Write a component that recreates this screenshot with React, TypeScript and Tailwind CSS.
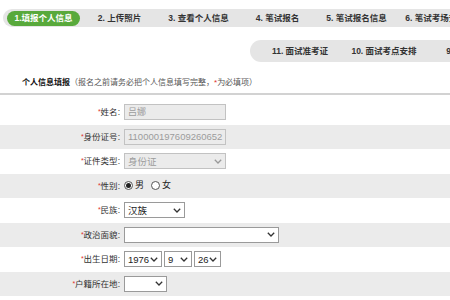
const FONT = { fontFamily: '"Liberation Sans", "Noto Sans CJK SC", sans-serif' };

const Chevron = ({ color = "#333" }: { color?: string }) => (
  <svg width="8" height="5" viewBox="0 0 8 5" className="shrink-0">
    <path d="M0.8 0.8 L4 4 L7.2 0.8" fill="none" stroke={color} strokeWidth="1.3" />
  </svg>
);

const Select = ({ value, w, disabled }: { value: string; w: string; disabled?: boolean }) => (
  <div
    className={`${w} h-[16px] flex items-center justify-between px-[3px] border ${
      disabled ? "bg-[#ebebeb] border-[#c2c2c2] text-[#9c9c9c]" : "bg-white border-[#9a9a9a] text-[#222]"
    }`}
  >
    <span className="text-[9.5px] leading-none">{value}</span>
    <Chevron color={disabled ? "#999" : "#333"} />
  </div>
);

const Radio = ({ checked }: { checked?: boolean }) => (
  <span className="w-[9px] h-[9px] rounded-full border border-[#555] bg-white flex items-center justify-center">
    {checked && <span className="w-[5px] h-[5px] rounded-full bg-[#222]" />}
  </span>
);

const Row = ({ label, gray, children }: { label: string; gray?: boolean; children: React.ReactNode }) => (
  <div className={`flex items-center h-[24.5px] ${gray ? "bg-[#ebebeb]" : "bg-white"}`}>
    <div className="w-[120px] text-right text-[8.5px] text-[#333] leading-none">
      <span className="text-[#e0322c] text-[7px] align-top">*</span>
      {label}:
    </div>
    <div className="ml-[4px] flex items-center">{children}</div>
  </div>
);

const tabs = ["2. 上传照片", "3. 查看个人信息", "4. 笔试报名", "5. 笔试报名信息", "6. 笔试考场安排"];
const tabs2 = ["11. 面试准考证", "10. 面试考点安排", "9. 面试成绩"];

export default function App() {
  return (
    <div className="w-[450px] h-[300px] bg-white overflow-hidden" style={FONT}>
      {/* step tabs */}
      <div className="mt-[9px] ml-[3px] h-[18px] bg-[#e5e5e5] rounded-l-full flex items-center whitespace-nowrap overflow-hidden">
        <div className="ml-[4px] w-[73px] shrink-0 h-[15px] rounded-full bg-[#58a93b] text-white font-bold text-[8.5px] flex items-center justify-center">
          1.填报个人信息
        </div>
        {tabs.map((t) => (
          <div key={t} className="w-[79px] shrink-0 text-center font-bold text-[8.5px] text-[#333]">
            {t}
          </div>
        ))}
      </div>

      <div className="mt-[13px] ml-[250px] h-[22px] bg-[#e5e5e5] rounded-l-full flex items-center whitespace-nowrap pl-[8px] overflow-hidden">
        {tabs2.map((t) => (
          <div key={t} className="w-[84px] shrink-0 text-center font-bold text-[8.5px] text-[#333]">
            {t}
          </div>
        ))}
      </div>

      {/* section title */}
      <div className="mt-[12px] h-[21px] pl-[22px] border-b-2 border-[#d2d2d2] whitespace-nowrap leading-[12px]">
        <span className="font-bold text-[8px] text-[#111]">个人信息填报</span>
        <span className="text-[8px] text-[#555]">
          （报名之前请务必把个人信息填写完整，<span className="text-[#e0322c]">*</span>为必填项）
        </span>
      </div>

      {/* form */}
      <div className="mt-[5px]">
        <Row label="姓名">
          <div className="w-[102px] h-[16px] border border-[#c2c2c2] bg-[#ebebeb] px-[3px] flex items-center text-[9px] text-[#9c9c9c]">
            吕娜
          </div>
        </Row>
        <Row label="身份证号" gray>
          <div className="w-[102px] h-[16px] border border-[#c2c2c2] bg-[#ebebeb] px-[3px] flex items-center text-[9.5px] text-[#9c9c9c]">
            110000197609260652
          </div>
        </Row>
        <Row label="证件类型">
          <Select value="身份证" w="w-[102px]" disabled />
        </Row>
        <Row label="性别" gray>
          <div className="flex items-center text-[9px] text-[#222]">
            <Radio checked />
            <span className="ml-[2px]">男</span>
            <span className="ml-[7px]" />
            <Radio />
            <span className="ml-[2px]">女</span>
          </div>
        </Row>
        <Row label="民族">
          <Select value="汉族" w="w-[61px]" />
        </Row>
        <Row label="政治面貌" gray>
          <Select value="" w="w-[155px]" />
        </Row>
        <Row label="出生日期">
          <div className="flex gap-[2px]">
            <Select value="1976" w="w-[38px]" />
            <Select value="9" w="w-[28px]" />
            <Select value="26" w="w-[27px]" />
          </div>
        </Row>
        <Row label="户籍所在地" gray>
          <Select value="" w="w-[43px]" />
        </Row>
      </div>
    </div>
  );
}
